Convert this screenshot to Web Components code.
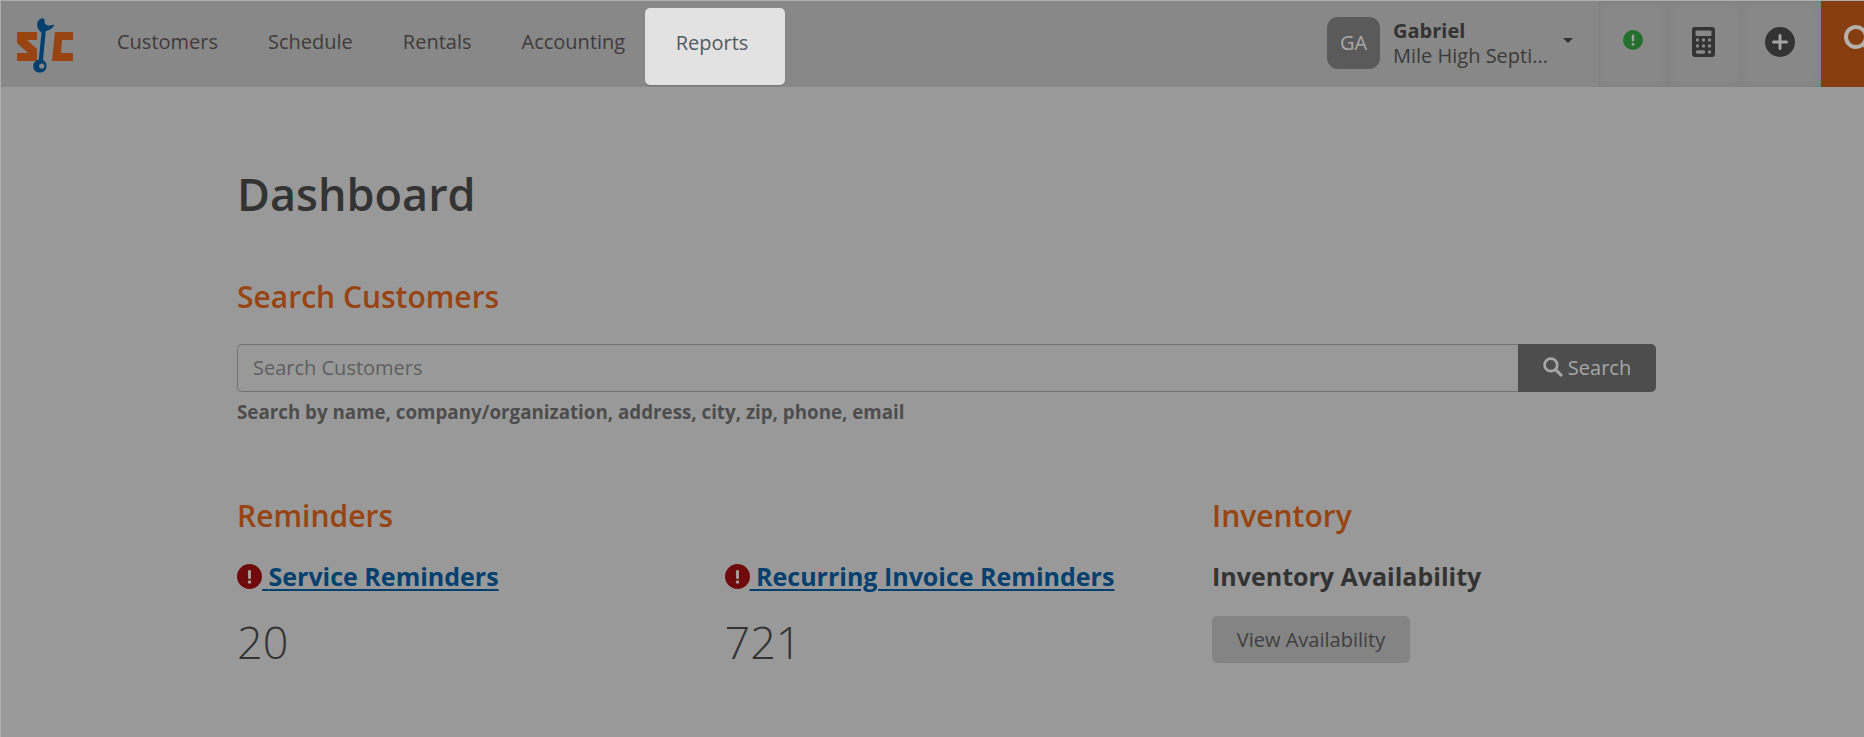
<!DOCTYPE html>
<html lang="en"><head><meta charset="utf-8"><title>Dashboard</title>
<style>
html,body{margin:0;height:100%;overflow:hidden;background:#999}
body{font-family:"Open Sans","Noto Sans",sans-serif;color:#333;border-top:1px solid #adadad;border-left:1px solid #adadad;box-sizing:border-box}
</style></head><body>
<app-header>
  <nav-item slot="nav" style="margin-left:0">Customers</nav-item>
  <nav-item slot="nav">Schedule</nav-item>
  <nav-item slot="nav">Rentals</nav-item>
  <nav-item slot="nav">Accounting</nav-item>
  <nav-item slot="nav" active>Reports</nav-item>
</app-header>
<dash-page></dash-page>
<script>
function def(name,html,init){customElements.define(name,class extends HTMLElement{connectedCallback(){if(this.shadowRoot)return;const r=this.attachShadow({mode:'open'});r.innerHTML=html;init&&init(this,r);}});}

def('nav-item',`<style>
:host{display:flex;align-items:center;font-size:20px;color:#3f3b3b;height:86px;margin-left:50px;white-space:nowrap}
:host([active]){margin:7px 0 0 19.500px;height:77px;box-sizing:border-box;padding:0 37px 1px 31px;background:#e2e2e2;border-radius:5px;color:#4f5a66;box-shadow:0 1px 1px rgba(0,0,0,.15)}
span{position:relative;top:-3px}
:host([active]) span{top:-4px}
</style><span><slot></slot></span>`);

def('app-header',`<style>
:host{display:flex;height:86px;background:#888;align-items:flex-start;overflow:hidden}
.logo{flex:none;width:116px;height:86px}
.nav{display:flex;flex:1;align-items:flex-start}
.user{display:flex;align-items:center;height:86px;width:271px;flex:none}
.av{width:53px;height:52px;border-radius:11px;background:#5a5a5a;color:#a9a9a9;font-size:20px;display:flex;align-items:center;justify-content:center;margin-top:-3px}
.who{margin-left:13px;font-size:20px;line-height:25px;color:#3a3a3a;width:170px;margin-top:-3px}
.who b{display:block;color:#333;font-size:20px}
.who span{display:block;white-space:nowrap}
.caret{width:0;height:0;border:5px solid transparent;border-top:5px solid #333;border-bottom:0;margin-top:-7px}
.cell{flex:none;height:86px;display:flex;align-items:center;justify-content:center;box-shadow:inset 0 0 8px rgba(0,0,0,.07)}
.c1{width:70px}.c2{width:74px}.c3{width:79px}
.c2 svg,.c3 svg{margin-left:-3px}
.go{flex:none;width:43px;height:87px;box-sizing:border-box;background:#863d10;border-top:1px solid #a04a15;margin-top:-1px;overflow:hidden}
.go svg{display:block;margin:24px 0 0 23px}
</style>
<svg class="logo" viewBox="0 0 116 86" aria-label="SC logo" role="img">
 <g transform="translate(-1,-1)">
 <path fill="#974412" d="M17 32h20v8H27l10 9v12H17v-8h11l-11-10z"/>
 <path fill="#974412" d="M55 32h18v8H62l-1 13h12v8H52l3-29z" />
 <path fill="#03406f" d="M39.500 19.500c-2.500 2-3 6-1.500 9 1 2 2.500 3 3.500 4l-2.700 27c-3.500 1-6 4-5.500 7.500.5 3.500 3.500 6 7.500 5.500 3.800-.4 6-3.500 5.700-7-.2-2.200-1.500-4.200-3.500-5.400l2.800-29c3.500-.5 7-2.500 8.500-6.500l-6 1.200-3.500-2-.6-5.300c-1.500.1-3 0-4.700.5z"/>
 <circle cx="41.700" cy="66" r="2.600" fill="#888"/>
 </g>
</svg>
<div class="nav"><slot name="nav"></slot></div>
<div class="user"><div class="av">GA</div><div class="who"><b>Gabriel</b><span>Mile High Septi...</span></div><div class="caret"></div></div>
<div class="cell c1"><svg width="20" height="20" viewBox="0 0 20 20" style="margin-top:-8px"><circle cx="10" cy="10" r="10" fill="#25702f"/><rect x="8.800" y="4.500" width="2.400" height="7" rx="1" fill="#9aa59a"/><circle cx="10" cy="14.300" r="1.400" fill="#9aa59a"/></svg></div>
<div class="cell c2"><svg width="23" height="30" viewBox="0 0 23 30" style="margin-top:-4px"><rect width="23" height="30" rx="3" fill="#333"/><rect x="3.500" y="3.500" width="16" height="5.500" rx="1" fill="#888"/><g fill="#888"><circle cx="5.500" cy="13" r="1.700"/><circle cx="11.500" cy="13" r="1.700"/><circle cx="17.500" cy="13" r="1.700"/><circle cx="5.500" cy="19" r="1.700"/><circle cx="11.500" cy="19" r="1.700"/><circle cx="17.500" cy="19" r="1.700"/><rect x="3.800" y="23.300" width="9.500" height="3.400" rx="1.700"/><circle cx="17.500" cy="25" r="1.700"/></g></svg></div>
<div class="cell c3"><svg width="30" height="30" viewBox="0 0 30 30" style="margin-top:-4px"><circle cx="15" cy="15" r="15" fill="#333"/><path d="M15 8.500v13M8.500 15h13" stroke="#a3a3a3" stroke-width="3" stroke-linecap="round"/></svg></div>
<div class="go"><svg width="30" height="30" viewBox="0 0 30 30"><circle cx="12" cy="12" r="10" fill="none" stroke="#b5b0ac" stroke-width="4"/><path d="M19 19l8 8" stroke="#b5b0ac" stroke-width="4"/></svg></div>
`);

def('alert-link',`<style>
:host{display:block;font-size:25px;font-weight:700;line-height:34px;white-space:nowrap}
a{color:#03406f;text-decoration:underline;text-decoration-thickness:2px;text-underline-offset:3px}
svg{vertical-align:-3px}
</style><a href="#"><svg width="25" height="25" viewBox="0 0 25 25"><circle cx="12.500" cy="12.500" r="12.500" fill="#700a0a"/><rect x="11" y="6" width="3" height="9" rx="1.300" fill="#a99"/><circle cx="12.500" cy="18" r="1.800" fill="#a99"/></svg> <slot></slot></a>`);

def('dash-page',`<style>
:host{display:block;padding:0 208px 0 236px}
h1{margin:0;font-size:45px;font-weight:600;line-height:60px;color:#333;padding-top:76.500px}
h2{margin:0;font-size:30px;font-weight:600;line-height:40px;color:#974412;padding-top:53.500px}
.search{display:flex;margin-top:27px;height:48px}
input{flex:1;min-width:0;box-sizing:border-box;height:48px;border:1px solid #737373;border-right:0;border-radius:5px 0 0 5px;background:#999;padding:0 15px 2px;font:20px "Open Sans",sans-serif;color:#333;outline:none}
input::placeholder{color:#5f5f5f;opacity:1}
button{font:20px "Open Sans",sans-serif;cursor:pointer;border:0}
.go{width:138px;flex:none;background:#4d4d4d;color:#a7a7a7;border-radius:0 5px 5px 0;display:flex;align-items:center;justify-content:center;gap:5px;padding:0 0 2px}
.hint{font-size:18.750px;font-weight:700;color:#4d4d4d;line-height:27px;margin-top:6px}
.cols{display:grid;grid-template-columns:487.500px 487.500px 1fr;margin-top:71px}
h3{margin:0;font-size:30px;font-weight:600;line-height:40px;color:#974412;height:63px}
.spacer{height:63px}
.num{font-size:45px;font-weight:300;line-height:62px;color:#333;margin-top:18px}
.label{font-size:25px;font-weight:700;line-height:34px;color:#333;margin-top:0}
.view{margin-top:23px;width:198px;height:47px;background:#848484;color:#3f3f3f;border-radius:5px;padding:0}
</style>
<h1>Dashboard</h1>
<h2>Search Customers</h2>
<div class="search"><input type="text" placeholder="Search Customers" aria-label="Search Customers"><button class="go"><svg width="20" height="20" viewBox="0 0 19 19"><circle cx="7.500" cy="7.500" r="6" fill="none" stroke="#a7a7a7" stroke-width="2.600"/><path d="M12 12l6 6" stroke="#a7a7a7" stroke-width="2.800"/></svg>Search</button></div>
<div class="hint">Search by name, company/organization, address, city, zip, phone, email</div>
<div class="cols">
 <div><h3>Reminders</h3><alert-link>Service Reminders</alert-link><div class="num">20</div></div>
 <div><div class="spacer"></div><alert-link>Recurring Invoice Reminders</alert-link><div class="num">721</div></div>
 <div><h3>Inventory</h3><div class="label">Inventory Availability</div><button class="view">View Availability</button></div>
</div>`);
</script>
</body></html>
